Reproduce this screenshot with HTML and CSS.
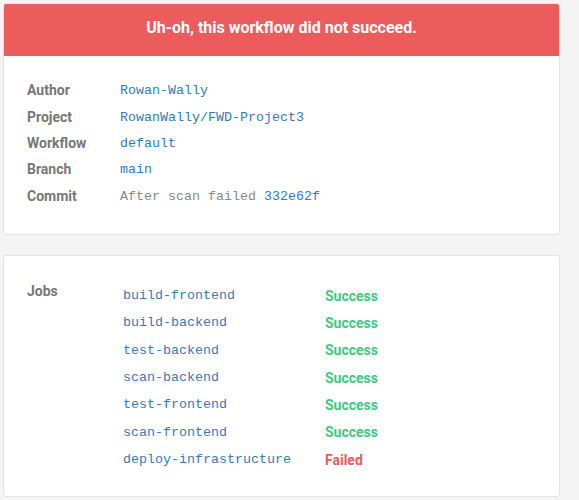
FILE: index.html
```html
<!DOCTYPE html>
<html>
<head>
<meta charset="utf-8">
<link rel="stylesheet" href="styles.css">
</head>
<body>
<div class="page">
  <section class="card">
    <header class="banner">Uh-oh, this workflow did not succeed.</header>
    <div class="details">
      <div class="row"><span class="label">Author</span><span class="value link">Rowan-Wally</span></div>
      <div class="row"><span class="label">Project</span><span class="value link">RowanWally/FWD-Project3</span></div>
      <div class="row"><span class="label">Workflow</span><span class="value link">default</span></div>
      <div class="row"><span class="label">Branch</span><span class="value link">main</span></div>
      <div class="row"><span class="label">Commit</span><span class="value muted">After scan failed <span class="link">332e62f</span></span></div>
    </div>
  </section>
  <section class="card jobs-card">
    <div class="jobs-label">Jobs</div>
    <div class="jobs">
      <div class="job"><span class="job-name">build-frontend</span><span class="status ok">Success</span></div>
      <div class="job"><span class="job-name">build-backend</span><span class="status ok">Success</span></div>
      <div class="job"><span class="job-name">test-backend</span><span class="status ok">Success</span></div>
      <div class="job"><span class="job-name">scan-backend</span><span class="status ok">Success</span></div>
      <div class="job"><span class="job-name">test-frontend</span><span class="status ok">Success</span></div>
      <div class="job"><span class="job-name">scan-frontend</span><span class="status ok">Success</span></div>
      <div class="job"><span class="job-name">deploy-infrastructure</span><span class="status fail">Failed</span></div>
    </div>
  </section>
</div>
</body>
</html>
```
FILE: styles.css
```css
html, body {
  margin: 0;
  padding: 0;
  background: #f4f4f4;
}
body {
  font-family: Roboto, "Liberation Sans", sans-serif;
}
.page {
  padding: 3px 0 0 3px;
  width: 557px;
  display: flex;
  flex-direction: column;
  gap: 20px;
}
.card {
  background: #fff;
  border: 1px solid #e4e4e4;
  border-radius: 3px;
  overflow: hidden;
}
.banner {
  background: #ec5c5c;
  color: #fff;
  font-weight: 700;
  font-size: 16px;
  height: 52px;
  line-height: 47px;
  text-align: center;
}
.details {
  padding: 21px 0 25px 23px;
}
.row {
  display: flex;
  align-items: center;
  height: 26.4px;
}
.label {
  width: 93px;
  font-weight: 700;
  font-size: 14px;
  color: #777;
}
.value {
  font-family: "Liberation Mono", monospace;
  font-size: 13.33px;
  padding-top: 1px;
}
.link { color: #3579bd; }
.muted { color: #888; }
.jobs-card {
  display: flex;
  padding: 26px 0 23px 23px;
}
.jobs-label {
  width: 96px;
  font-weight: 700;
  font-size: 14px;
  color: #777;
  line-height: 18px;
}
.jobs {
  display: flex;
  flex-direction: column;
}
.job {
  display: flex;
  align-items: center;
  height: 27.33px;
}
.job-name {
  width: 202px;
  font-family: "Liberation Mono", monospace;
  font-size: 13.33px;
  color: #3579bd;
}
.status {
  font-weight: 700;
  font-size: 14px;
}
.ok { color: #3ec982; }
.fail { color: #ec5c5c; }
```
